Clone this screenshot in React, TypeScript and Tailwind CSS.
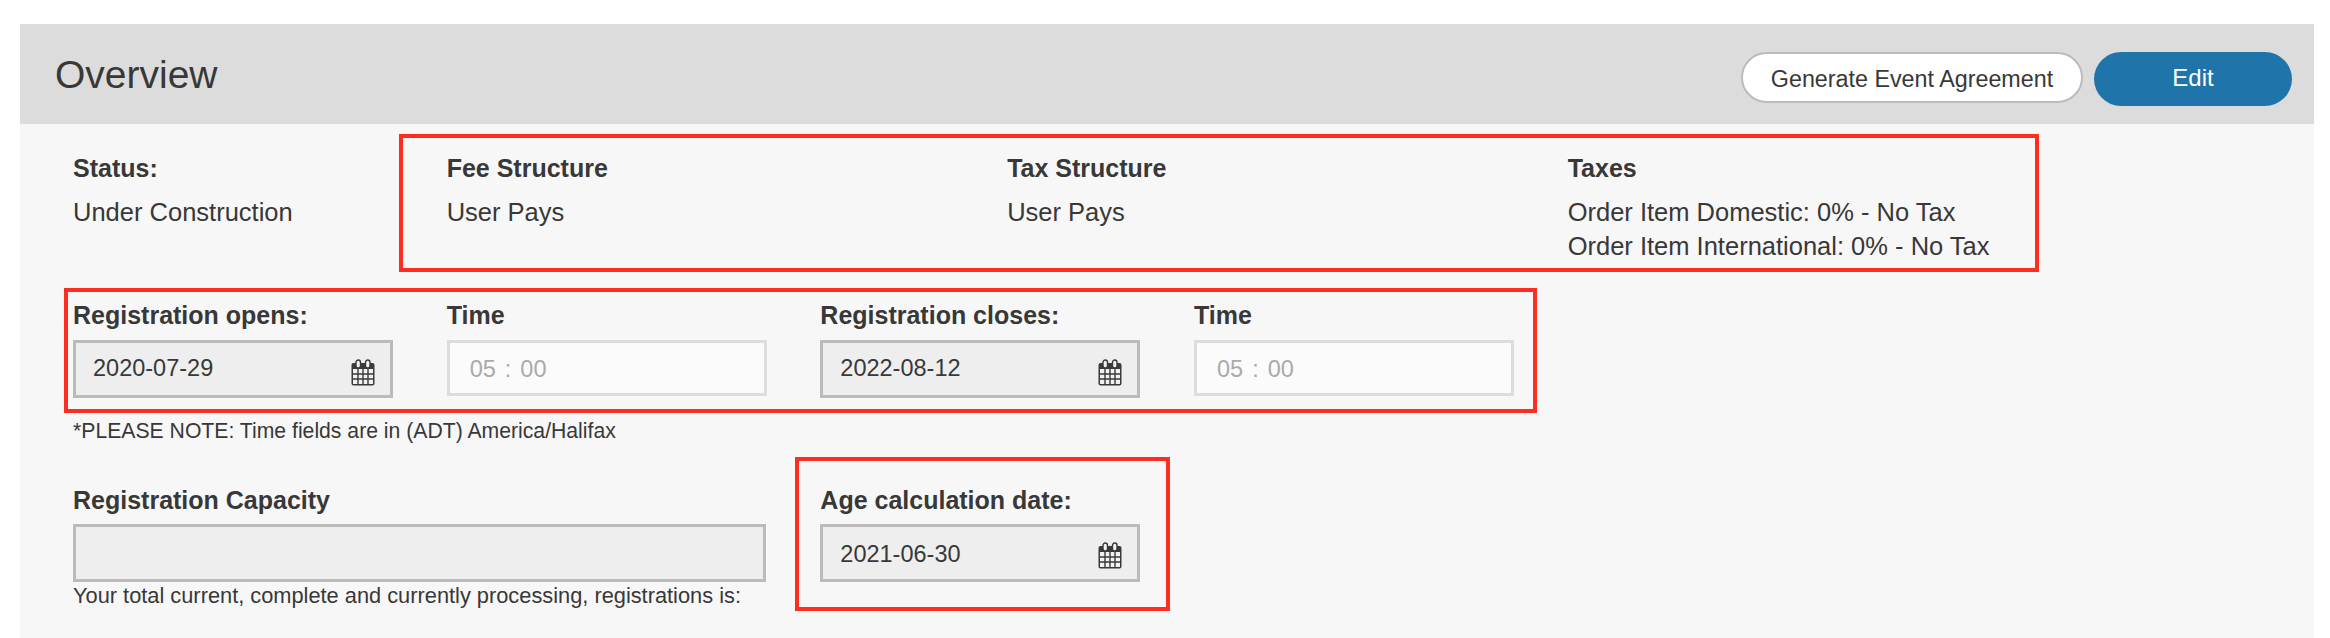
import type { ReactNode } from "react"

// Hand-drawn so the binding rings and the cell grid match the reference
function CalendarIcon() {
  return (
    <svg width="24" height="27" viewBox="0 0 24 27" className="shrink-0">
      <rect x="0.5" y="4" width="23" height="22.5" rx="2" fill="#3a3a3a" />
      <rect x="2" y="10" width="20" height="15" fill="#f1f1f1" />
      <path d="M7 10v15M12 10v15M17 10v15M2 15h20M2 20h20" stroke="#3a3a3a" strokeWidth="1.4" fill="none" />
      <rect x="5" y="1" width="4.5" height="8" rx="2.2" fill="#f1f1f1" stroke="#3a3a3a" strokeWidth="1.4" />
      <rect x="14.5" y="1" width="4.5" height="8" rx="2.2" fill="#f1f1f1" stroke="#3a3a3a" strokeWidth="1.4" />
    </svg>
  )
}

function Label({ children }: { children: ReactNode }) {
  return <div className="h-[34px] text-[25px] leading-[34px] font-bold">{children}</div>
}

function DateField({ value, low }: { value: string; low?: boolean }) {
  return (
    <div className="flex h-[58px] w-[320px] items-center justify-between border-[3px] border-[#bbbbbb] bg-[#eeeeee] pr-[15px] pl-[17px]">
      <span className={low ? "mt-[4px] text-[23.5px]" : "text-[23.5px]"}>{value}</span>
      <span className={low ? "mt-[4px]" : "mt-[6px]"}>
        <CalendarIcon />
      </span>
    </div>
  )
}

function TimeField() {
  return (
    <div className="flex h-[56px] w-[320px] items-center gap-[9px] border-[3px] border-[#dddddd] bg-[#fbfbfb] pt-[4px] pl-[20px] text-[23.5px] text-[#aaaaaa]">
      <span>05</span>
      <span>:</span>
      <span>00</span>
    </div>
  )
}

function Annotation({ className }: { className: string }) {
  return <div className={`pointer-events-none absolute border-4 border-[#ff2d20] ${className}`} />
}

export default function App() {
  return (
    <div className="h-[638px] w-[2330px] bg-white pt-[24px] pr-[16px] pl-[20px] font-['Liberation_Sans',Arial,sans-serif] text-[#383838]">
      <div className="flex h-[100px] items-start justify-between bg-[#dcdcdc] pr-[22px] pl-[35px]">
        <h1 className="mt-[28px] text-[39px] leading-[46px] font-normal">Overview</h1>
        <div className="mt-[28px] flex items-start gap-[11px]">
          <button
            type="button"
            className="h-[51px] w-[342px] rounded-[26px] border-2 border-[#bbbbbb] bg-white pt-[2px] text-[23.3px] leading-[46px] text-[#383838]"
          >
            Generate Event Agreement
          </button>
          <button type="button" className="h-[54px] w-[198px] rounded-[27px] bg-[#1f74a9] pb-[3px] text-[24px] text-white">
            Edit
          </button>
        </div>
      </div>

      <div className="relative h-[514px] bg-[#f7f7f7] pt-[27px] pl-[53px]">
        <div className="grid w-[2242px] grid-cols-12 text-[25.5px] leading-[34px]">
          <div className="col-span-2">
            <Label>Status:</Label>
            <div className="mt-[10px]">Under Construction</div>
          </div>
          <div className="col-span-3">
            <Label>Fee Structure</Label>
            <div className="mt-[10px]">User Pays</div>
          </div>
          <div className="col-span-3">
            <Label>Tax Structure</Label>
            <div className="mt-[10px]">User Pays</div>
          </div>
          <div className="col-span-4">
            <Label>Taxes</Label>
            <div className="mt-[10px]">Order Item Domestic: 0% - No Tax</div>
            <div>Order Item International: 0% - No Tax</div>
          </div>
        </div>

        <div className="mt-[35px] grid w-[2242px] grid-cols-6">
          <div>
            <Label>Registration opens:</Label>
            <div className="mt-[8px]">
              <DateField value="2020-07-29" />
            </div>
          </div>
          <div>
            <Label>Time</Label>
            <div className="mt-[8px]">
              <TimeField />
            </div>
          </div>
          <div>
            <Label>Registration closes:</Label>
            <div className="mt-[8px]">
              <DateField value="2022-08-12" />
            </div>
          </div>
          <div>
            <Label>Time</Label>
            <div className="mt-[8px]">
              <TimeField />
            </div>
          </div>
        </div>

        <p className="mt-[19px] text-[21.2px] leading-[28px]">*PLEASE NOTE: Time fields are in (ADT) America/Halifax</p>

        <div className="mt-[38px] grid w-[2242px] grid-cols-6">
          <div className="col-span-2">
            <Label>Registration Capacity</Label>
            <div className="mt-[7px] h-[58px] w-[693px] border-[3px] border-[#bbbbbb] bg-[#eeeeee]" />
            <p className="text-[21.8px] leading-[28px]">Your total current, complete and currently processing, registrations is:</p>
          </div>
          <div>
            <Label>Age calculation date:</Label>
            <div className="mt-[7px]">
              <DateField value="2021-06-30" low />
            </div>
          </div>
        </div>

        <Annotation className="top-[10px] left-[379px] h-[138px] w-[1640px]" />
        <Annotation className="top-[164px] left-[44px] h-[125px] w-[1473px]" />
        <Annotation className="top-[333px] left-[775px] h-[154px] w-[375px]" />
      </div>
    </div>
  )
}
